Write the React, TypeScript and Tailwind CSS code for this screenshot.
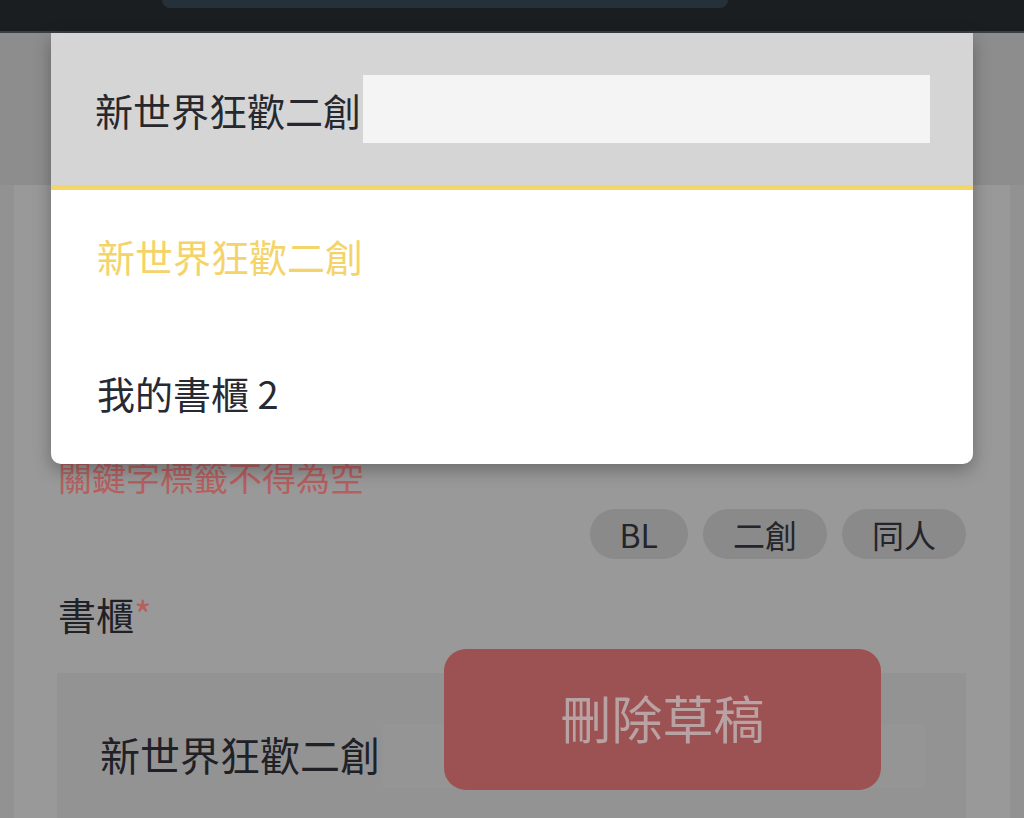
import { useState } from "react";

const shelves = ["新世界狂歡二創", "我的書櫃 2"];
const tags = ["BL", "二創", "同人"];

export default function App() {
  const [selected, setSelected] = useState(0);

  return (
    <div className="relative w-[1024px] h-[818px] overflow-hidden bg-[#999999] font-[family-name:'Noto_Sans_CJK_TC','Noto_Sans',sans-serif]">
      {/* status bar */}
      <div className="h-[31px] bg-[#1b1e21] flex justify-start">
        <div className="ml-[162px] w-[566px] h-[8px] rounded-b-[16px] bg-[#24313a]" />
      </div>
      <div className="h-[2px] bg-[#3a3f44]" />

      {/* header band under the overlay */}
      <div className="h-[152px] bg-[#8d8d8d]" />

      {/* form body */}
      <div className="flex h-[633px]">
        <div className="w-[14px] bg-[#929292]" />
        <div className="flex-1 bg-[#999999] flex flex-col">
          <div className="mt-[272px] pl-[44px] text-[34px] leading-[40px] text-[#b65f5f]">
            關鍵字標籤不得為空
          </div>
          <div className="mt-[12px] pr-[44px] flex justify-end gap-[15px]">
            {tags.map((t) => (
              <div
                key={t}
                className="h-[50px] px-[30px] rounded-full bg-[#8a8a8a] flex items-center text-[32px] text-[#23252a]"
              >
                {t}
              </div>
            ))}
          </div>
          <div className="mt-[31px] pl-[44px] text-[38px] leading-[48px] text-[#1f2126]">
            書櫃<span className="text-[#b65f5f]">*</span>
          </div>
          <div className="mt-[35px] ml-[43px] mr-[44px] flex-1 bg-[#939393] flex items-start pt-[55px] pl-[43px] pr-[41px]">
            <span className="text-[40px] leading-[52px] text-[#1f2126] whitespace-nowrap">
              新世界狂歡二創
            </span>
            <div className="ml-[3px] flex-1 h-[64px] -mt-[4px] bg-[#959595]" />
          </div>
        </div>
        <div className="w-[14px] bg-[#929292]" />
      </div>

      {/* floating delete button */}
      <button className="absolute left-[444px] top-[649px] w-[437px] h-[141px] rounded-[22px] bg-[#9c5152] text-[51px] text-[#b9a2a3] flex items-center justify-center pb-[4px]">
        刪除草稿
      </button>

      {/* shelf dropdown */}
      <div className="absolute left-[51px] top-[33px] w-[922px] rounded-b-[10px] bg-white shadow-[0_6px_18px_rgba(0,0,0,0.3)] overflow-hidden">
        <div className="h-[152px] bg-[#d5d5d5] flex items-center pl-[44px] pr-[43px]">
          <span className="text-[38px] text-[#26282d] whitespace-nowrap">{shelves[selected]}</span>
          <div className="ml-[2px] flex-1 h-[68px] bg-[#f4f4f4]" />
        </div>
        <div className="h-[5px] bg-[#f5d565]" />
        <div className="flex flex-col">
          {shelves.map((s, i) => (
            <div
              key={s}
              onClick={() => setSelected(i)}
              className={
                "h-[137px] flex items-center pl-[46px] pb-[6px] text-[38px] cursor-pointer " +
                (i === selected ? "text-[#f4d46a]" : "text-[#272a33]")
              }
            >
              {s}
            </div>
          ))}
        </div>
      </div>
    </div>
  );
}
